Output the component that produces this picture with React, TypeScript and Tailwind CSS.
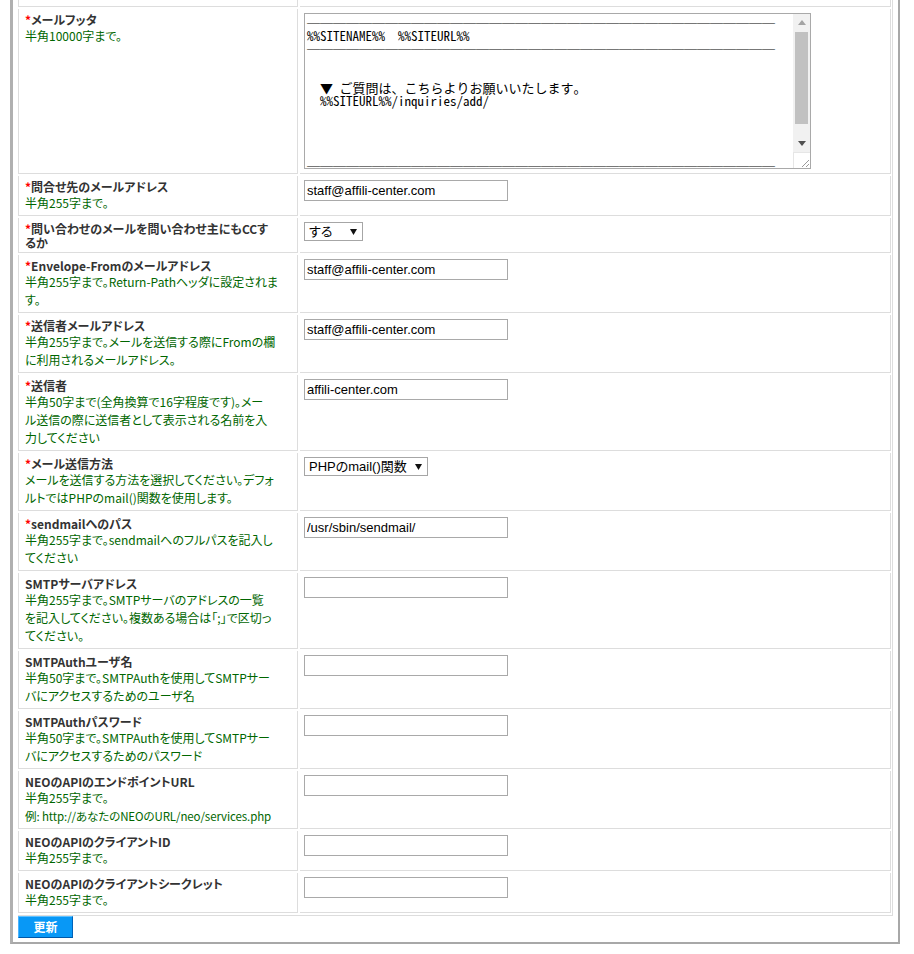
import React from "react";

type RowDef = {
  req?: boolean;
  label: string[];
  desc: React.ReactNode[];
  field: React.ReactNode;
  labelPb?: string;
};

function TextInput({ value }: { value: string }) {
  return (
    <input
      readOnly
      value={value}
      className="block w-[204px] h-[21px] border border-[#a9a9a9] bg-white px-[2px] text-[13px] text-black font-['Liberation_Sans','Noto_Sans_CJK_JP',sans-serif] outline-none"
    />
  );
}

function FakeSelect({ value, w }: { value: string; w: string }) {
  return (
    <div
      className={
        "flex h-[19px] items-center justify-between border border-[#a6a6a6] bg-white pl-[4px] pr-[5px] text-[13px] leading-[17px] text-black font-['Liberation_Sans','Noto_Sans_CJK_JP',sans-serif] " +
        w
      }
    >
      <span>{value}</span>
      <svg width="7" height="6" viewBox="0 0 7 6">
        <polygon points="0,0 7,0 3.5,6" fill="#111" />
      </svg>
    </div>
  );
}

const RULE = "────────────────────────────────────";

function FakeTextarea() {
  const lines = [
    RULE,
    "%%SITENAME%%  %%SITEURL%%",
    RULE,
    "",
    "",
    "  ▼ ご質問は、こちらよりお願いいたします。",
    "  %%SITEURL%%/inquiries/add/",
    "",
    "",
    "",
    "",
    RULE,
  ];
  return (
    <div className="flex w-[507px] h-[156px] border border-[#a9a9a9] bg-white">
      <div className="flex-1 overflow-hidden pl-[2px] pt-[2px] text-[13px] leading-[13px] text-black whitespace-pre font-['Noto_Sans_Mono_CJK_JP','Noto_Sans_CJK_JP','Liberation_Mono',monospace]">
        {lines.map((l, i) => (
          <div key={i} className={l === RULE ? "h-[13px] font-bold text-black" : "h-[13px]"}>
            {l === "" ? "\u00a0" : l}
          </div>
        ))}
      </div>
      <div className="flex w-[17px] flex-col">
        <div className="flex flex-1 flex-col bg-[#f1f1f1]">
          <div className="flex h-[17px] items-center justify-center">
            <svg width="8" height="5" viewBox="0 0 8 5">
              <polygon points="4,0 8,5 0,5" fill="#a3a3a3" />
            </svg>
          </div>
          <div className="mx-[2px] mt-[1px] h-[92px] bg-[#c1c1c1]" />
          <div className="flex-1" />
          <div className="flex h-[17px] items-center justify-center">
            <svg width="8" height="5" viewBox="0 0 8 5">
              <polygon points="0,0 8,0 4,5" fill="#505050" />
            </svg>
          </div>
        </div>
        <div className="flex h-[16px] items-end justify-end border-l border-t border-[#e6e6e6] bg-white">
          <svg width="12" height="12" viewBox="0 0 12 12">
            <line x1="11" y1="4" x2="4" y2="11" stroke="#9a9a9a" strokeWidth="1" />
            <line x1="11" y1="8" x2="8" y2="11" stroke="#9a9a9a" strokeWidth="1" />
          </svg>
        </div>
      </div>
    </div>
  );
}

const rows: RowDef[] = [
  {
    req: true,
    label: ["メールフッタ"],
    desc: ["半角10000字まで。"],
    field: <FakeTextarea />,
  },
  {
    req: true,
    label: ["問合せ先のメールアドレス"],
    desc: ["半角255字まで。"],
    field: <TextInput value="staff@affili-center.com" />,
  },
  {
    req: true,
    label: ["問い合わせのメールを問い合わせ主にもCCす", "るか"],
    desc: [],
    field: <FakeSelect value="する" w="w-[59px]" />,
    labelPb: "pb-[2px]",
  },
  {
    req: true,
    label: ["Envelope-Fromのメールアドレス"],
    desc: ["半角255字まで。Return-Pathヘッダに設定されま", "す。"],
    field: <TextInput value="staff@affili-center.com" />,
  },
  {
    req: true,
    label: ["送信者メールアドレス"],
    desc: ["半角255字まで。メールを送信する際にFromの欄", "に利用されるメールアドレス。"],
    field: <TextInput value="staff@affili-center.com" />,
  },
  {
    req: true,
    label: ["送信者"],
    desc: [
      "半角50字まで(全角換算で16字程度です)。メー",
      "ル送信の際に送信者として表示される名前を入",
      "力してください",
    ],
    field: <TextInput value="affili-center.com" />,
  },
  {
    req: true,
    label: ["メール送信方法"],
    desc: ["メールを送信する方法を選択してください。デフォ", "ルトではPHPのmail()関数を使用します。"],
    field: <FakeSelect value="PHPのmail()関数" w="w-[124px]" />,
  },
  {
    req: true,
    label: ["sendmailへのパス"],
    desc: ["半角255字まで。sendmailへのフルパスを記入し", "てください"],
    field: <TextInput value="/usr/sbin/sendmail/" />,
  },
  {
    label: ["SMTPサーバアドレス"],
    desc: [
      "半角255字まで。SMTPサーバのアドレスの一覧",
      "を記入してください。複数ある場合は「;」で区切っ",
      "てください。",
    ],
    field: <TextInput value="" />,
  },
  {
    label: ["SMTPAuthユーザ名"],
    desc: ["半角50字まで。SMTPAuthを使用してSMTPサー", "バにアクセスするためのユーザ名"],
    field: <TextInput value="" />,
  },
  {
    label: ["SMTPAuthパスワード"],
    desc: ["半角50字まで。SMTPAuthを使用してSMTPサー", "バにアクセスするためのパスワード"],
    field: <TextInput value="" />,
  },
  {
    label: ["NEOのAPIのエンドポイントURL"],
    desc: [
      "半角255字まで。",
      <span key="ex" className="text-[11.5px] tracking-[-0.1px]">
        例: http://あなたのNEOのURL/neo/services.php
      </span>,
    ],
    field: <TextInput value="" />,
  },
  {
    label: ["NEOのAPIのクライアントID"],
    desc: ["半角255字まで。"],
    field: <TextInput value="" />,
  },
  {
    label: ["NEOのAPIのクライアントシークレット"],
    desc: ["半角255字まで。"],
    field: <TextInput value="" />,
  },
];

function Row({ r, first }: { r: RowDef; first: boolean }) {
  return (
    <div className="grid grid-cols-[280px_591px] gap-x-[2px]">
      <div
        className={
          "border-l border-r border-b border-[#dddddd] pl-[6px] pr-[4px] pt-[4px] " +
          (r.labelPb ?? "pb-[3px]")
        }
      >
        <div className="whitespace-nowrap text-[12px] font-bold leading-[14px] text-[#333333]">
          {r.label.map((l, i) => (
            <div key={i}>
              {i === 0 && r.req && <span className="text-[#ff0000]">*</span>}
              {l}
            </div>
          ))}
        </div>
        {r.desc.length > 0 && (
          <div className="whitespace-nowrap text-[12px] leading-[18px] text-[#006600]">
            {r.desc.map((d, i) => (
              <div key={i}>{d}</div>
            ))}
          </div>
        )}
      </div>
      <div
        className={
          "border-r border-b border-[#dddddd] pl-[4px] pt-[4px] " +
          (first ? "pb-[4px]" : "pb-[3px]")
        }
      >
        {r.field}
      </div>
    </div>
  );
}

export default function App() {
  return (
    <div className="min-h-[954px] bg-white font-['Noto_Sans_CJK_JP','Liberation_Sans',sans-serif] [font-feature-settings:'palt']">
      <div className="ml-[10px] w-[890px] border-l-[3px] border-r-2 border-b-2 border-l-[#b0b0b0] border-r-[#a8a8a8] border-b-[#a8a8a8] pl-[5px] pr-[5px] pb-[4px]">
        <div className="flex flex-col gap-y-[2px] border-r border-b border-[#dddddd] pr-[1px] pb-[2px]">
          <div className="grid grid-cols-[280px_591px] gap-x-[2px]">
            <div className="h-[7px] border-l border-r border-b border-[#dddddd]" />
            <div className="h-[7px] border-r border-b border-[#dddddd]" />
          </div>
          {rows.map((r, i) => (
            <Row key={i} r={r} first={i === 0} />
          ))}
        </div>
        <button className="mt-0 flex h-[22px] w-[55px] items-center justify-center border border-t-[#5ec0ff] border-l-[#4bb4ff] border-r-[#0062b8] border-b-[#0058a8] bg-[#0898f6] text-[12px] font-bold text-white">
          更新
        </button>
      </div>
    </div>
  );
}
